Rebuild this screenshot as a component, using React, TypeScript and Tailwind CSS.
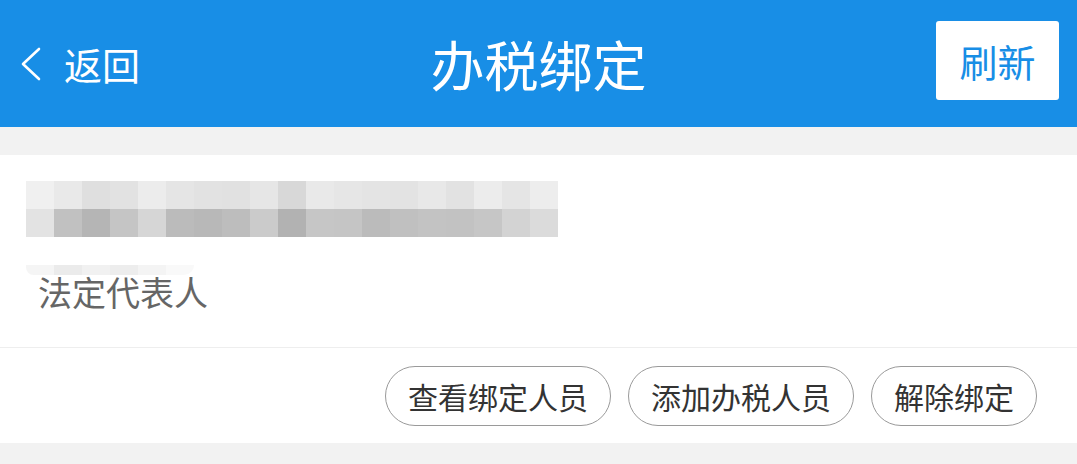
import React from "react";

const topRow = [
  "#f0f0f0", "#e9e9e9", "#dfdfdf", "#e2e2e2", "#ececec", "#e5e5e5", "#e2e2e2",
  "#e1e1e1", "#e6e6e6", "#d8d8d8", "#e9e9e9", "#e6e6e6", "#e4e4e4", "#e3e3e3",
  "#e8e8e8", "#e2e2e2", "#ececec", "#e5e5e5", "#ededed",
];
const bottomRow = [
  "#e3e3e3", "#c1c1c1", "#b5b5b5", "#c5c5c5", "#d6d6d6", "#bbbbbb", "#b8b8b8",
  "#bdbdbd", "#cbcbcb", "#b2b2b2", "#c6c6c6", "#c5c5c5", "#bbbbbb", "#c0c0c0",
  "#c3c3c3", "#c2c2c2", "#c6c6c6", "#d3d3d3", "#dbdbdb",
];
const faintRow = ["#f0f0f0", "#dedede", "#e8e8e8", "#e2e2e2", "#eeeeee", "#f6f6f6"];

const font = "font-['Noto_Sans_CJK_SC','Noto_Sans',sans-serif]";

export default function App() {
  return (
    <div className={`w-[1077px] h-[464px] bg-[#f2f2f2] overflow-hidden ${font}`}>
      {/* 顶部导航 */}
      <header className="relative h-[127px] bg-[#188ee6] flex items-center justify-between pl-[20px] pr-[18px]">
        <div className="flex items-center gap-[22px] text-white">
          <svg width="22" height="34" viewBox="0 0 22 34" fill="none">
            <path d="M19 2 L3 17 L19 32" stroke="white" strokeWidth="2.6" strokeLinecap="round" strokeLinejoin="round" />
          </svg>
          <span className="text-[38px] leading-none">返回</span>
        </div>
        <h1 className="absolute left-1/2 -translate-x-1/2 text-white text-[54px] leading-none">
          办税绑定
        </h1>
        <button className="mb-[6px] w-[123px] h-[79px] bg-white rounded-[3px] text-[#188ee6] text-[38px] leading-none">
          刷新
        </button>
      </header>

      {/* 卡片 */}
      <section className="mt-[28px] bg-white">
        <div className="pt-[26px] pl-[26px] pb-[38px] border-b border-[#eeeeee]">
          <div className="flex flex-col">
            <div className="flex">
              {topRow.map((c, i) => (
                <div key={i} className="w-[28px] h-[28px]" style={{ backgroundColor: c }} />
              ))}
            </div>
            <div className="flex">
              {bottomRow.map((c, i) => (
                <div key={i} className="w-[28px] h-[28px]" style={{ backgroundColor: c }} />
              ))}
            </div>
          </div>
          <div className="mt-[28px] flex w-[168px] h-[10px] overflow-hidden rounded-br-[40px] rounded-bl-[30px] opacity-60">
            {faintRow.map((c, i) => (
              <div key={i} className="w-[28px] h-full" style={{ backgroundColor: c }} />
            ))}
          </div>
          <p className="pl-[12px] text-[34px] leading-none text-[#666666]">法定代表人</p>
        </div>

        <div className="h-[95px] flex items-center justify-end gap-[17px] pr-[40px]">
          <button className="h-[60px] px-[22px] rounded-full border border-[#9a9a9a] text-[30px] leading-none text-[#333333]">
            查看绑定人员
          </button>
          <button className="h-[60px] px-[22px] rounded-full border border-[#9a9a9a] text-[30px] leading-none text-[#333333]">
            添加办税人员
          </button>
          <button className="h-[60px] px-[22px] rounded-full border border-[#9a9a9a] text-[30px] leading-none text-[#333333]">
            解除绑定
          </button>
        </div>
      </section>
    </div>
  );
}
